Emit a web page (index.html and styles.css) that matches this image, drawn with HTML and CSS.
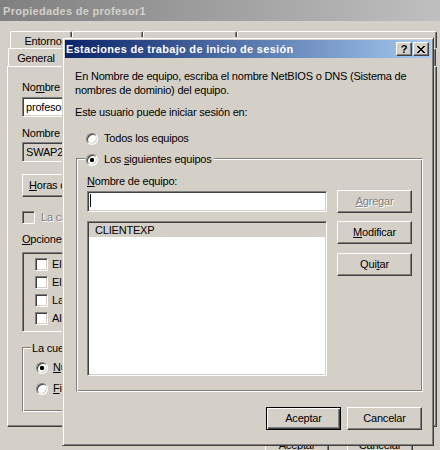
FILE: index.html
```html
<!DOCTYPE html>
<html lang="es">
<head>
<meta charset="utf-8">
<title>Estaciones de trabajo de inicio de sesión</title>
<link rel="stylesheet" href="styles.css">
</head>
<body>
<div class="desk">
  <div class="bgwin">
    <div class="bg-title">Propiedades de profesor1</div>
    <div class="bg-body">
      <div class="tabrow r1">
        <div class="tab w-ent">Entorno</div>
        <div class="tab w-ses">Sesiones</div>
        <div class="tab w-ctl">Control remoto</div>
        <div class="tab w-ts">Perfil de Servicios de Terminal Server</div>
      </div>
      <div class="tabrow r2">
        <div class="tab w-gen">General</div>
        <div class="tab w-dir">Dirección</div>
        <div class="tab w-cta">Cuenta</div>
        <div class="tab w-rest">Perfil</div>
      </div>
      <div class="panel">
        <div class="lbl">No<u>m</u>bre de inicio de sesión de usuario:</div>
        <div class="edit e1">profesor1</div>
        <div class="lbl l2">Nombre de inicio de sesión de usuario (anterior a Windows 2000):</div>
        <div class="edit ro e2">SWAP2\</div>
        <div class="btn bhoras"><span><u>H</u>oras de inicio de sesión...</span></div>
        <div class="chkrow dis lock"><span class="chk dchk"></span><span>La cuenta está bloqueada</span></div>
        <div class="lbl l3"><u>O</u>pciones de cuenta:</div>
        <div class="optframe">
          <div class="chkrow opt"><span class="chk"></span><span>El usuario debe cambiar la contraseña</span></div>
          <div class="chkrow opt"><span class="chk"></span><span>El usuario no puede cambiar la contraseña</span></div>
          <div class="chkrow opt"><span class="chk"></span><span>La contraseña nunca caduca</span></div>
          <div class="chkrow opt"><span class="chk"></span><span>Almacenar contraseña con cifrado reversible</span></div>
        </div>
        <div class="grp bgrp">
          <div class="legend blg">La cuenta caduca</div>
          <div class="radiorow rb rb1"><span class="radio on"></span><span><u>N</u>unca</span></div>
          <div class="radiorow rb rb2"><span class="radio"></span><span><u>F</u>in de:</span></div>
        </div>
      </div>
      <div class="bgbtns">
        <div class="btn bb1">Aceptar</div>
        <div class="btn bb2">Cancelar</div>
      </div>
    </div>
  </div>

  <div class="dlg">
    <div class="titlebar">
      <span class="ttl">Estaciones de trabajo de inicio de sesión</span>
      <span class="tbtn help">?</span>
      <span class="tbtn close"><svg width="8" height="7" viewBox="0 0 8 7" shape-rendering="crispEdges"><path fill="#000" d="M0 0h2v1H0zM6 0h2v1H6zM1 1h2v1H1zM5 1h2v1H5zM2 2h4v1H2zM3 3h2v1H3zM2 4h4v1H2zM1 5h2v1H1zM5 5h2v1H5zM0 6h2v1H0zM6 6h2v1H6z"/></svg></span>
    </div>
    <div class="dlg-body">
      <p class="intro">En Nombre de equipo, escriba el nombre NetBIOS o DNS (Sistema de<br>nombres de dominio) del equipo.</p>
      <p class="usr">Este usuario puede iniciar sesión en:</p>
      <div class="radiorow rall"><span class="radio"></span><span>Todos los equipos</span></div>
      <div class="grp fgrp">
        <div class="legend flg"><span class="radio on"></span><span>Los <u>s</u>iguientes equipos</span></div>
        <div class="lbl nq"><u>N</u>ombre de equipo:</div>
        <div class="cols">
          <div class="leftcol">
            <div class="edit name"><span class="caret"></span></div>
            <div class="listbox"><div class="item sel">CLIENTEXP</div></div>
          </div>
          <div class="rightcol">
            <div class="btn dis"><span><u>A</u>gregar</span></div>
            <div class="btn bmod"><span><u>M</u>odificar</span></div>
            <div class="btn bqui"><span>Qui<u>t</u>ar</span></div>
          </div>
        </div>
      </div>
      <div class="btnrow">
        <div class="btn def">Aceptar</div>
        <div class="btn">Cancelar</div>
      </div>
    </div>
  </div>
</div>
</body>
</html>
```

FILE: styles.css
```css
* { box-sizing: border-box; }
html, body { margin: 0; padding: 0; }
body {
  width: 440px; height: 450px; overflow: hidden;
  background: #d4d0c8;
  font-family: "Liberation Sans", Arial, sans-serif;
  font-size: 11px; line-height: 13px; color: #000;
  letter-spacing: -0.2px;
}
u { text-decoration: underline; text-underline-offset: 1px; }
p { margin: 0; }

.desk { position: relative; width: 440px; height: 450px; overflow: hidden; }

/* ---------- background window ---------- */
.bgwin { width: 446px; height: 470px; background: #d4d0c8; }
.bg-title {
  height: 21px; padding: 5px 0 0 3px;
  background: linear-gradient(to right, #808080, #c0c0c0);
  color: #d4d0c8; font-weight: bold; white-space: nowrap;
  letter-spacing: 0.3px;
}
.bg-body { padding-top: 10px; }
.tabrow { display: flex; white-space: nowrap; }
.tabrow.r1 { margin-left: 10px; height: 17px; }
.tabrow.r2 { margin-left: 8px; height: 18px; }
.tab {
  border-top: 1px solid #fff; border-left: 1px solid #fff; border-right: 1px solid #404040;
  border-radius: 2px 2px 0 0;
  box-shadow: inset -1px 0 #808080;
  padding-top: 3px; text-align: center; overflow: hidden;
}
.w-ent { width: 62px; padding-left: 4px; }
.w-ses { width: 71px; }
.w-ctl { width: 94px; }
.w-ts { width: 200px; }
.w-gen { width: 56px; }
.w-dir { width: 70px; }
.w-cta { width: 70px; }
.w-rest { width: 232px; }

.panel {
  margin-left: 7px; width: 430px; height: 361px;
  border-top: 1px solid #fff; border-left: 1px solid #fff;
  border-right: 1px solid #404040; border-bottom: 1px solid #404040;
  box-shadow: inset -1px -1px #808080;
  padding: 14px 0 0 14px;
  white-space: nowrap;
}
.lbl { height: 13px; }
.panel .l2 { margin-top: 10px; }
.panel .l3 { margin-top: 9px; }

.edit {
  background: #fff;
  border: 1px solid; border-color: #808080 #fff #fff #808080;
  box-shadow: inset 1px 1px #404040, inset -1px -1px #d4d0c8;
}
.panel .edit { width: 240px; height: 20px; padding: 3px 0 0 3px; }
.panel .e1 { margin-top: 3px; }
.panel .e2 { margin-top: 2px; }
.edit.ro { background: #d4d0c8; }

.btn {
  width: 75px; height: 23px; flex: none;
  background: #d4d0c8;
  border: 1px solid; border-color: #fff #404040 #404040 #fff;
  box-shadow: inset -1px -1px #808080;
  display: flex; align-items: center; justify-content: center;
  white-space: nowrap;
}
.btn.def {
  border-color: #000;
  box-shadow: inset 1px 1px #fff, inset -1px -1px #404040, inset -2px -2px #808080;
}
.btn.dis { color: #808080; text-shadow: 1px 1px #fff; }
.bhoras { width: 150px; margin-top: 12px; height: 23px; justify-content: flex-start; padding-left: 6px; }

.chkrow { display: flex; align-items: center; height: 13px; gap: 6px; }
.chkrow.opt { gap: 4px; }
.chkrow.dis { color: #808080; text-shadow: 1px 1px #fff; }
.lock { margin-top: 14px; }
.chk {
  width: 13px; height: 13px; flex: none; background: #fff;
  border: 1px solid; border-color: #808080 #fff #fff #808080;
  box-shadow: inset 1px 1px #404040, inset -1px -1px #d4d0c8;
}
.chk.dchk { background: #d4d0c8; }

.optframe {
  margin-top: 6px; width: 260px; height: 80px;
  border: 1px solid; border-color: #808080 #fff #fff #808080;
  box-shadow: inset 1px 1px #404040, inset -1px -1px #d4d0c8;
  padding: 5px 0 0 12px;
  display: flex; flex-direction: column; gap: 5px;
}

.grp {
  border: 1px solid; border-color: #808080 #fff #fff #808080;
  box-shadow: inset 1px 1px #fff, inset -1px -1px #808080;
}
.legend {
  display: flex; align-items: center; height: 13px; width: max-content;
  background: #d4d0c8; white-space: nowrap;
}
.bgrp { margin-top: 15px; width: 260px; height: 65px; }
.blg { margin: -6px 0 0 8px; padding: 0 2px 0 1px; }

.radiorow { display: flex; align-items: center; height: 13px; gap: 6px; white-space: nowrap; }
.radiorow.rb { gap: 5px; }
.radio {
  width: 12px; height: 12px; flex: none; border-radius: 50%;
  background: #fff;
  border: 1px solid; border-color: #808080 #fff #fff #808080;
  box-shadow: inset 1px 1px #404040, inset -1px -1px #d4d0c8;
}
.radio.on { background: radial-gradient(circle, #000 0 2px, #fff 2.3px); }
.rb1 { margin: 6px 0 0 13px; }
.rb2 { margin: 8px 0 0 13px; }

.bgbtns { display: flex; gap: 18px; margin: 7px 0 0 265px; }
.bb1 { width: 64px; }
.bb2 { width: 66px; }

/* ---------- dialog ---------- */
.dlg {
  position: absolute; left: 62px; top: 37px;
  width: 372px; height: 409px;
  background: #d4d0c8;
  border: 1px solid; border-color: #d4d0c8 #404040 #404040 #d4d0c8;
  box-shadow: inset 1px 1px #fff, inset -1px -1px #808080;
  padding: 2px;
}
.titlebar {
  height: 18px; display: flex; align-items: center;
  background: linear-gradient(to right, #0a246a, #a6caf0);
  color: #fff; font-weight: bold; padding: 0 2px 0 1px;
}
.ttl { flex: 1; white-space: nowrap; overflow: hidden; letter-spacing: 0.3px; }
.tbtn {
  width: 16px; height: 14px; flex: none;
  background: #d4d0c8;
  border: 1px solid; border-color: #fff #404040 #404040 #fff;
  box-shadow: inset -1px -1px #808080;
  display: flex; align-items: center; justify-content: center;
  color: #000; letter-spacing: 0;
}
.help { font-weight: bold; font-size: 11px; line-height: 11px; margin-right: 1px; }
.close svg { display: block; }

.intro { margin: 11px 0 0 10px; line-height: 14px; white-space: nowrap; }
.usr { margin: 9px 0 0 10px; }
.rall { margin: 13px 0 0 21px; }
.fgrp { margin: 13px 0 0 11px; width: 347px; height: 234px; }
.flg { margin: -6px 0 0 8px; padding: 0 2px 0 1px; gap: 6px; }
.nq { margin: 9px 0 0 10px; }
.cols { display: flex; margin: 2px 0 0 10px; gap: 10px; }
.leftcol { width: 240px; }
.edit.name { margin-top: 1px; height: 21px; padding: 2px 0 0 2px; }
.caret { display: block; width: 1px; height: 13px; background: #000; }
.listbox {
  margin-top: 9px; height: 155px; background: #fff;
  border: 1px solid; border-color: #808080 #fff #fff #808080;
  box-shadow: inset 1px 1px #404040, inset -1px -1px #d4d0c8;
  padding: 1px;
}
.item { height: 14px; line-height: 14px; padding-left: 6px; }
.item.sel { background: #d4d0c8; }
.rightcol { display: flex; flex-direction: column; }
.bmod { margin-top: 8px; }
.bqui { margin-top: 9px; }
.btnrow { display: flex; justify-content: flex-end; gap: 6px; margin-top: 15px; padding-right: 9px; }
```
